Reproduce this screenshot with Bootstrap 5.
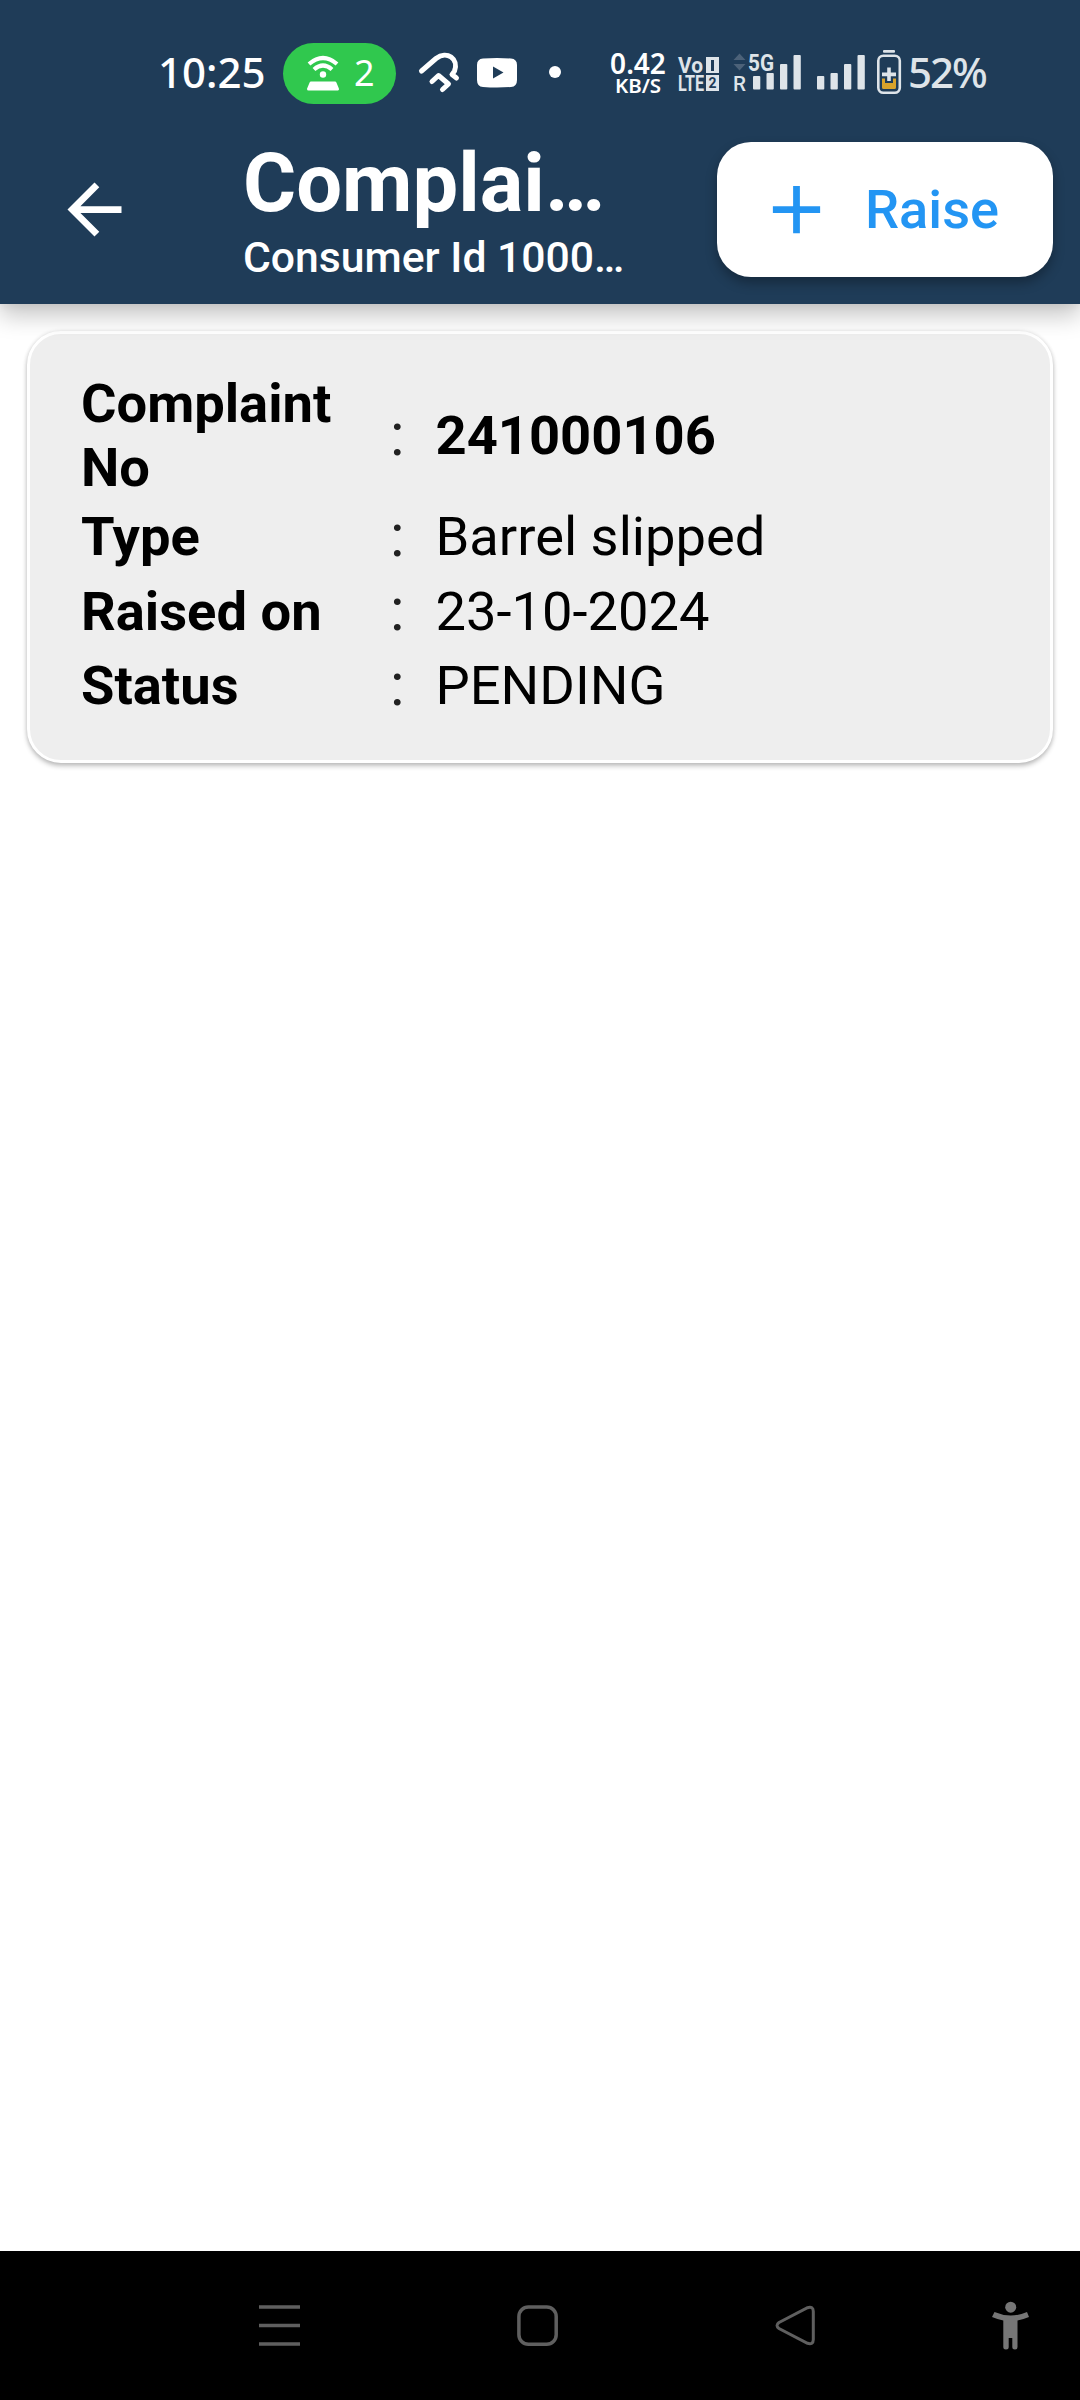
<!DOCTYPE html>
<html lang="en">
<head>
<meta charset="utf-8">
<meta name="viewport" content="width=device-width, initial-scale=1">
<title>Complaints</title>
<link rel="stylesheet" href="https://cdn.jsdelivr.net/npm/bootstrap@5.3.0/dist/css/bootstrap.min.css">
<style>
  body { font-family: Roboto, "Liberation Sans", sans-serif; height: 2400px; overflow: hidden; background: #fff; }
  svg { display: block; flex: none; overflow: visible; }
  .app-header { background: #1f3c58; height: 304px; z-index: 2; color: #fff; box-shadow: 0 12px 22px rgba(0,0,0,.22), 0 3px 8px rgba(0,0,0,.05); }
  .sys-bar { height: 115px; padding: 31px 0 0 158px; font-family: "Noto Sans", sans-serif; }
  .clock { width: 125px; font-size: 42px; font-weight: 500; line-height: 60px; padding-bottom: 2px; }
  .hotspot { width: 113px; height: 61px; background: #30c84e; padding-left: 23px; margin-right: 23px; }
  .hotspot span { font-size: 36px; line-height: 58px; margin-left: 14px; padding-bottom: 1px; }
  .net-speed { width: 73px; margin-left: 38px; padding-right: 7px; line-height: 1; }
  .net-speed .rate { font-size: 28px; font-weight: 600; line-height: 22px; margin-bottom: 2px; }
  .net-speed .unit { font-size: 20.5px; font-weight: 600; line-height: 18px; }
  .pct { color: #dee4e9; font-size: 42px; font-weight: 500; line-height: 60px; margin-left: 5px; letter-spacing: -2px; padding-bottom: 2px; }
  .title-bar { height: 189px; padding: 0 27px 0 54px; }
  .titles { margin-left: 108px; width: 474px; }
  .page-title { font-size: 81.3px; font-weight: 700; line-height: 93px; margin: 0 0 2px; }
  .page-sub { font-size: 42.7px; font-weight: 500; line-height: 50px; }
  .btn-raise, .btn-raise:hover { width: 336px; height: 135px; border: 0; border-radius: 34px; background: #fff; color: #2395f3; font-size: 54.2px; font-weight: 500; padding: 0 0 0 39px; box-shadow: 0 6px 12px rgba(0,0,0,.3); }
  .btn-raise span { margin-left: 28px; }
  .complaint { margin: 27px 27px 0; height: 432px; border: 3px solid #fff; border-radius: 34px; background: #eee; padding: 38px 51px; color: #000; font-size: 54.3px; box-shadow: 0 3px 5px rgba(0,0,0,.24), 0 0 4px rgba(0,0,0,.1); }
  .field { height: 74.5px; line-height: 64px; }
  .field-tall { height: 128px; }
  .f-label { width: 309px; font-weight: 700; }
  .f-colon { width: 45.5px; color: #212121; font-size: 60px; padding-bottom: 3px; }
  .sys-nav { height: 149px; background: #000; padding-left: 259px; }
</style>
<script src="https://cdn.jsdelivr.net/npm/bootstrap@5.3.0/dist/js/bootstrap.bundle.min.js"></script>
</head>
<body class="d-flex flex-column">
<header class="app-header position-relative flex-shrink-0">
  <div class="sys-bar d-flex align-items-center">
    <div class="clock">10:25</div>
    <div class="hotspot rounded-pill d-flex align-items-center">
      <svg width="34" height="36" viewBox="0 0 34 36" fill="none" stroke="#fff" stroke-width="4.2"><path d="M3 9Q17-3 31 9M8 14.5Q17 6.5 26 14.5"/><circle cx="17" cy="19.5" r="3.2" fill="#fff" stroke="none"/><path d="M5 28H29L31.5 34H2.500Z" fill="#fff" stroke-width="3" stroke-linejoin="round"/></svg>
      <span>2</span>
    </div>
    <svg width="40" height="66" viewBox="419 40 40 66" fill="none" stroke="#fff" stroke-width="5" stroke-linecap="round" stroke-linejoin="round"><path d="M421.500 71L436 58.500C447 50 459 59 454.500 71Q453 73.500 452 74.500L456.500 78M432 81.500L438.500 75.500L448.500 84L442.500 89.500"/></svg>
    <svg class="ms-3" width="43" height="66" viewBox="475 40 43 66"><path fill="#fff" fill-rule="evenodd" d="M483 58.500Q497 57.500 511 58.500Q517 59 517 65V80Q517 86.500 511 87Q497 88 483 87Q477 86.500 477 80V65Q477 59 483 58.500ZM493 66.500V78.500L503.500 72.500Z"/></svg>
    <svg width="49" height="66" viewBox="518 40 49 66"><circle cx="555" cy="72" r="6" fill="#fff"/></svg>
    <div class="net-speed text-center">
      <div class="rate">0.42</div>
      <div class="unit">KB/S</div>
    </div>
    <!-- volte badge, both signal meters and the battery -->
    <svg width="225" height="66" viewBox="678 40 225 66" fill="#dee4e9" font-family="Roboto, sans-serif" font-weight="700">
      <text x="678" y="73" font-size="22" textLength="25" lengthAdjust="spacingAndGlyphs">Vo</text>
      <text x="678" y="90.500" font-size="21.500" textLength="26" lengthAdjust="spacingAndGlyphs">LTE</text>
      <rect x="706" y="57" width="13" height="16"/><rect x="706" y="75" width="13" height="16"/>
      <g fill="#1f3c58"><rect x="711" y="60" width="3" height="11"/><text x="708.500" y="88" font-size="14" textLength="8" lengthAdjust="spacingAndGlyphs">2</text></g>
      <path fill="#4c6279" d="M733.500 60L739.500 53.500L745.500 60ZM733.500 64L739.500 70.500L745.500 64Z"/>
      <text x="748" y="71" font-size="24.500" textLength="26" lengthAdjust="spacingAndGlyphs">5G</text>
      <text x="733" y="91" font-size="21" font-weight="500" textLength="13" lengthAdjust="spacingAndGlyphs">R</text>
      <rect x="753" y="76" width="7.300" height="13.500" rx="1"/><rect x="766.500" y="73" width="7.300" height="16.500" rx="1"/><rect x="780" y="64" width="7.300" height="25.500" rx="1"/><rect x="793.500" y="55" width="7.300" height="34.500" rx="1"/>
      <rect x="817" y="76" width="7.300" height="13.500" rx="1"/><rect x="830.500" y="73" width="7.300" height="16.500" rx="1"/><rect x="844" y="64" width="7.300" height="25.500" rx="1"/><rect x="857.500" y="55" width="7.300" height="34.500" rx="1"/>
      <rect x="883" y="50" width="12" height="2.800" rx="1"/>
      <rect x="878.300" y="55.800" width="21.500" height="37" rx="5" fill="none" stroke="#dee4e9" stroke-width="2.600"/>
      <path fill="#d9a32b" d="M882 78.500H885V83H893V78.500H896V87.500Q896 89 894.500 89H883.500Q882 89 882 87.500Z"/>
      <path d="M887.200 67.500H890.800V72.500H896V76.300H890.800V81H887.200V76.300H882V72.500H887.200Z"/>
    </svg>
    <div class="pct">52%</div>
  </div>
  <div class="title-bar d-flex align-items-center">
    <svg width="81" height="81" viewBox="0 0 24 24" fill="#fff"><path d="M20 11H7.830l5.590-5.590L12 4l-8 8 8 8 1.410-1.410L7.830 13H20v-2z"/></svg>
    <div class="titles text-nowrap">
      <h1 class="page-title">Complai…</h1>
      <div class="page-sub">Consumer Id 1000…</div>
    </div>
    <button class="btn btn-raise d-flex align-items-center flex-shrink-0" type="button">
      <svg width="81" height="81" viewBox="0 0 24 24" fill="#2395f3"><path d="M19 13h-6v6h-2v-6H5v-2h6V5h2v6h6v2z"/></svg>
      <span>Raise</span>
    </button>
  </div>
</header>
<main class="flex-grow-1">
  <section class="complaint">
    <div class="field field-tall d-flex align-items-center"><div class="f-label">Complaint<br>No</div><div class="f-colon">:</div><div class="fw-bold">241000106</div></div>
    <div class="field d-flex align-items-center"><div class="f-label">Type</div><div class="f-colon">:</div><div>Barrel slipped</div></div>
    <div class="field d-flex align-items-center"><div class="f-label">Raised on</div><div class="f-colon">:</div><div>23-10-2024</div></div>
    <div class="field d-flex align-items-center"><div class="f-label">Status</div><div class="f-colon">:</div><div>PENDING</div></div>
  </section>
</main>
<nav class="sys-nav d-flex align-items-center flex-shrink-0">
  <svg width="258" height="41" viewBox="0 0 258 41" stroke="#5f5f5f" stroke-width="3.500"><path d="M0 2H41M0 20.500H41M0 39H41"/></svg>
  <svg width="258" height="41" viewBox="0 0 258 41" fill="none" stroke="#5f5f5f" stroke-width="3.500"><rect x="1.900" y="1.900" width="37.300" height="37.300" rx="9.500"/></svg>
  <svg width="217" height="41" viewBox="775 2305 217 41" fill="none" stroke="#5f5f5f" stroke-width="3"><path d="M779 2322.500L807.500 2307.700Q813.300 2306 813.300 2311.500V2339.500Q813.300 2345 807.500 2343.300L779 2328.500Q775 2325.500 779 2322.500Z"/></svg>
  <svg width="38" height="48" viewBox="992 2301.500 38 48" fill="#767676"><circle cx="1010.700" cy="2306.700" r="5.500"/><path d="M994.500 2311.500Q1010.700 2318.500 1027 2311.500L1029 2316.500Q1023 2319 1017.500 2320V2346.500Q1017.500 2349 1015 2349Q1012.300 2349 1012.300 2346.500V2337.500H1008.700V2346.500Q1008.700 2349 1006 2349Q1003.300 2349 1003.300 2346.500V2320Q998 2319 992 2316.500Z"/></svg>
</nav>
</body>
</html>
